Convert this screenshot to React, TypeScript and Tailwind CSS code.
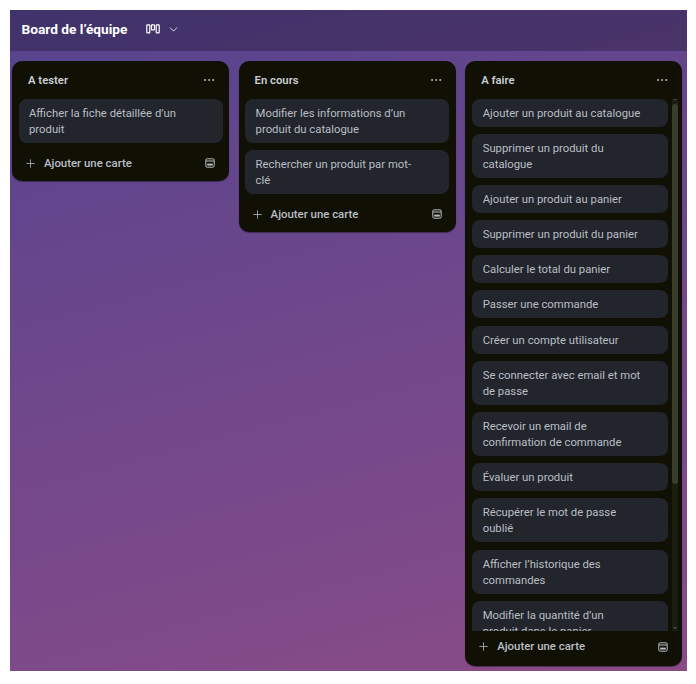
import { Plus, Ellipsis, ChevronDown } from "lucide-react";

interface Column {
  title: string;
  cards: string[];
  scroll?: boolean;
}

const columns: Column[] = [
  { title: "A tester", cards: ["Afficher la fiche détaillée d’un produit"] },
  {
    title: "En cours",
    cards: [
      "Modifier les informations d’un produit du catalogue",
      "Rechercher un produit par mot-clé",
    ],
  },
  {
    title: "A faire",
    scroll: true,
    cards: [
      "Ajouter un produit au catalogue",
      "Supprimer un produit du catalogue",
      "Ajouter un produit au panier",
      "Supprimer un produit du panier",
      "Calculer le total du panier",
      "Passer une commande",
      "Créer un compte utilisateur",
      "Se connecter avec email et mot de passe",
      "Recevoir un email de confirmation de commande",
      "Évaluer un produit",
      "Récupérer le mot de passe oublié",
      "Afficher l’historique des commandes",
      "Modifier la quantité d’un produit dans le panier",
    ],
  },
];

function BoardIcon() {
  return (
    <svg viewBox="0 0 14 10" width="14" height="10" fill="none" stroke="#fff" strokeWidth="1.2">
      <rect x="0.8" y="0.8" width="3" height="8" rx="0.6" />
      <rect x="5.5" y="0.8" width="3" height="5" rx="0.6" />
      <rect x="10.2" y="0.8" width="3" height="8" rx="0.6" />
    </svg>
  );
}

function TemplateIcon() {
  return (
    <svg viewBox="0 0 10 10" width="10" height="10" fill="none" stroke="#b6bbc2" strokeWidth="1">
      <rect x="0.8" y="0.8" width="8.4" height="8.4" rx="1.4" />
      <path d="M0.8 3h8.4" />
      <rect x="2.2" y="5.6" width="5.6" height="2" fill="#b6bbc2" stroke="none" />
    </svg>
  );
}

function ScrollArrow({ down }: { down?: boolean }) {
  return (
    <svg viewBox="0 0 6 6" width="6" height="6" className="shrink-0">
      <path d={down ? "M1 2h4L3 4.5z" : "M1 4h4L3 1.5z"} fill="#45483a" />
    </svg>
  );
}

function ListColumn({ column }: { column: Column }) {
  return (
    <section
      className={`flex w-[217px] shrink-0 flex-col rounded-[10px] bg-[#101004] shadow-[0_1px_1px_rgba(0,0,0,0.4)] ${
        column.scroll ? "h-[605px]" : ""
      }`}
    >
      <header className="flex h-[38px] shrink-0 items-center justify-between pl-4 pr-[13px]">
        <h2 className="pt-[4px] text-[11.3px] font-semibold text-[#c8ced4]">{column.title}</h2>
        <Ellipsis size={14} strokeWidth={1.6} className="text-[#b6bbc2]" />
      </header>
      <div className={`relative ${column.scroll ? "h-[532px] overflow-hidden" : ""}`}>
        <ul className={`flex flex-col gap-[7.2px] ${column.scroll ? "pl-[7px]" : "px-[6.5px]"}`}>
          {column.cards.map((card) => (
            <li
              key={card}
              className={`rounded-lg bg-[#22252b] pb-[5px] pl-[10.5px] pr-[11px] pt-[7px] text-[11.3px] leading-4 text-[#b9bfc6] ${
                column.scroll ? "w-[195.5px]" : ""
              }`}
            >
              <p className="max-w-[159px]">{card}</p>
            </li>
          ))}
        </ul>
        {column.scroll && (
          <div className="absolute right-[4px] top-[-3px] flex h-[535px] w-[6px] flex-col justify-between bg-[#1c1d11]">
            <ScrollArrow />
            <div className="mb-auto mt-[2px] h-[380px] w-[6px] rounded-full bg-[#3a3d2c]" />
            <ScrollArrow down />
          </div>
        )}
      </div>
      <footer
        className={`flex h-[35px] shrink-0 items-center justify-between pl-3 pr-[14px] text-[#b9bfc6] ${
          column.scroll ? "pb-[2px]" : "mt-[3.5px] pb-[0.5px]"
        }`}
      >
        <span className="flex items-center gap-[7px] text-[11.4px] font-medium">
          <Plus size={13} strokeWidth={1.4} />
          Ajouter une carte
        </span>
        <TemplateIcon />
      </footer>
    </section>
  );
}

export default function App() {
  return (
    <div className="h-[684px] w-[696px] bg-white pl-[9.5px] pt-[9.5px] font-['Roboto',sans-serif]">
      <main className="flex h-[661px] w-[677px] flex-col bg-[linear-gradient(165deg,#56438f,#8a4c87)]">
        <div className="flex h-[41px] shrink-0 items-center bg-black/25 pb-[2px] pl-3">
          <h1 className="text-[13.7px] font-bold text-white">Board de l’équipe</h1>
          <span className="ml-[18.5px]">
            <BoardIcon />
          </span>
          <ChevronDown size={13} strokeWidth={1.5} className="ml-[7px] text-white" />
        </div>
        <div className="flex items-start gap-[9.6px] pl-[2.5px] pt-[10px]">
          {columns.map((column) => (
            <ListColumn key={column.title} column={column} />
          ))}
        </div>
      </main>
    </div>
  );
}
